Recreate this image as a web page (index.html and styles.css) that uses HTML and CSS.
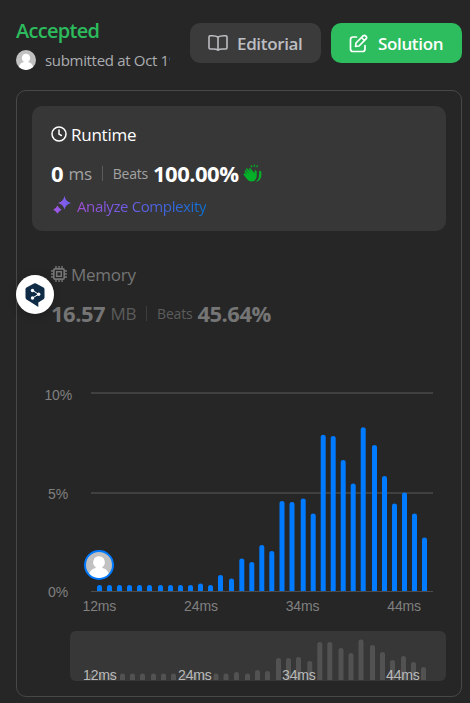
FILE: index.html
```html
<!DOCTYPE html>
<html lang="en">
<head>
<meta charset="utf-8">
<title>Submission result</title>
<link rel="stylesheet" href="styles.css">
</head>
<body>
<svg class="defs" width="0" height="0" aria-hidden="true">
  <defs>
    <linearGradient id="spark" x1="0" y1="0" x2="1" y2="0"><stop offset="0" stop-color="#a855e0"/><stop offset="1" stop-color="#6562f0"/></linearGradient>
    <clipPath id="round"><circle cx="10" cy="10" r="10"/></clipPath>
    <symbol id="avatar" viewBox="0 0 20 20"><g clip-path="url(#round)"><path d="M0 0h20v20H0z" fill="#c1c1c1"/><path d="M10 3.800A4.200 4.200 0 0 1 12.400 11.400V12.200C15.500 13 17 14.500 18 20H2C3 14.500 4.500 13 7.600 12.200V11.400A4.200 4.200 0 0 1 10 3.800Z" fill="#fff"/></g></symbol>
  </defs>
</svg>
<header class="top">
  <div class="status">
    <div class="accepted"><span>Accepted</span></div>
    <div class="by"><svg width="20" height="20"><use href="#avatar"/></svg><span class="submitted">submitted at Oct 19, 2024</span></div>
  </div>
  <div class="btn editorial">
    <svg width="20" height="18" viewBox="0 0 20 18" fill="none" stroke="currentColor" stroke-width="1.600" stroke-linejoin="round"><path d="M10 3.200C8.500 1.900 6.500 1.700 4 1.700H2.200Q1 1.700 1 2.900V13.800Q1 15 2.200 15H5C7.500 15 9 15.200 10 16.200C11 15.200 12.500 15 15 15H17.800Q19 15 19 13.800V2.900Q19 1.700 17.800 1.700H16C13.500 1.700 11.500 1.900 10 3.200V16"/></svg>
    <span>Editorial</span>
  </div>
  <div class="btn solution">
    <svg width="19" height="19" viewBox="0 0 19 19" fill="none" stroke="currentColor" stroke-width="1.700" stroke-linecap="round" stroke-linejoin="round"><path d="M7.500 3H4Q1.500 3 1.500 5.500V15Q1.500 17.500 4 17.500H13.500Q16 17.500 16 15V11.500"/><path d="M6.500 12.500L7 9L14.300 1.700Q15.600.8 16.900 2.100Q18.200 3.400 17.300 4.700L10 12ZM12.500 3.500L15.500 6.500"/></svg>
    <span>Solution</span>
  </div>
</header>
<main class="panel">
  <section class="card active">
    <div class="head"><svg width="16" height="16" viewBox="0 0 16 16" fill="none" stroke="currentColor" stroke-width="1.500" stroke-linecap="round" stroke-linejoin="round"><circle cx="8" cy="8" r="7"/><path d="M8 4v4.200l2.400 1.300"/></svg><span>Runtime</span></div>
    <div class="stats">
      <b class="zero">0</b><span class="unit">ms</span><i></i><span class="beats">Beats</span><b class="percent">100.00%</b>
      <svg class="clap" width="19" height="19" viewBox="0 0 19 19"><path d="M1 9.500Q1.700 8.500 2.600 9.400L4 10.800L1.500 7.200Q1.800 5.800 3 6.600L6.200 9.600L2.800 5Q3.500 3.400 4.900 4.900L8.400 8.600L5.900 4.700Q6.700 3.400 7.900 4.700L11.400 9.300L11.700 6.300Q13.500 5.800 13.700 7.700V12.500Q13 17.500 8.500 17.500Q5.500 17.500 3.500 14.500L.8 11Q.3 10 1 9.500Z" fill="#02b128"/><path d="M16.200 7Q18.500 5.900 18.300 8.500V12Q17.900 17 12.300 18Q15.800 15.500 16 12Z" fill="#02b128"/><path d="M8 1.200l.9 2M11.300 .6v2.400M14.500 1.200l-1 2" stroke="#02b128" stroke-width="1.200"/></svg>
    </div>
    <div class="analyze"><svg width="18" height="18" viewBox="0 0 18 18" fill="url(#spark)"><path d="M11.500 0Q12.600 5.500 18 7Q12.600 8.300 11.500 13.500Q10.300 8.300 5 7Q10.300 5.500 11.500 0ZM4.500 9.500Q5.600 12.200 8.700 13.700Q5.600 15.200 4.500 17.800Q3.300 15.200 .2 13.700Q3.300 12.200 4.500 9.500Z"/></svg><span>Analyze Complexity</span></div>
  </section>
  <section class="card memory">
    <div class="head"><svg width="16" height="16" viewBox="0 0 16 16" fill="none" stroke="currentColor"><rect x="2.800" y="2.800" width="10.400" height="10.400" rx="1.400" stroke-width="1.700"/><rect x="5.700" y="5.700" width="4.600" height="4.600" stroke-width="1.500"/><path d="M5 0v3M8 0v3M11 0v3M5 13v3M8 13v3M11 13v3M0 5h3M0 8h3M0 11h3M13 5h3M13 8h3M13 11h3" stroke-width="1.400"/></svg><span>Memory</span></div>
    <div class="stats"><b class="size">16.57</b><span class="unit mb">MB</span><i></i><span class="beats">Beats</span><b class="share">45.64%</b></div>
  </section>
  <svg class="chart" width="414" height="226" viewBox="32 380 414 226">
    <path class="grid" d="M91 393H433M91 493H433"/><path class="axis" d="M91 591.500H433"/>
    <g id="bars"></g>
    <circle cx="99" cy="565" r="14" fill="#c1c1c1"/>
    <svg x="85" y="551" width="28" height="28"><use href="#avatar"/></svg>
    <circle cx="99" cy="565" r="14" fill="none" stroke="#007aff" stroke-width="2"/>
    <g class="labels" text-anchor="end"><text x="72" y="400">10%</text><text x="68" y="499">5%</text><text x="68" y="597">0%</text></g>
  </svg>
  <div class="xlabels"><span>12ms</span><span>24ms</span><span>34ms</span><span>44ms</span></div>
  <svg class="mini" width="376" height="50" viewBox="70 631 376 50">
    <g id="minibars"></g>
    <g class="minilabels"><text x="83" y="680">12ms</text><text x="178" y="680">24ms</text><text x="282" y="680">34ms</text><text x="386" y="680">44ms</text></g>
  </svg>
</main>
<div class="translator"><svg width="20" height="24" viewBox="0 0 20 24"><path d="M9 .4Q10 0 11 .4L18.500 4.600Q19.500 5.200 19.500 6.300V14.600Q19.500 15.600 18.500 16.300L13.300 19.400V24L9.500 21.400L1.500 16.500Q.5 15.800.5 14.600V6.300Q.5 5.200 1.500 4.600Z" fill="#0f2b46"/><path d="M7.500 7.300L13.500 11.300L7.500 15" fill="none" stroke="#fff"/><g fill="#fff"><circle cx="7.500" cy="7.500" r="1.700"/><circle cx="13.700" cy="11.300" r="1.700"/><circle cx="7.500" cy="15" r="1.700"/></g></svg></div>
<script src="chart.js"></script>
</body>
</html>
```
FILE: styles.css
```css
* { box-sizing: border-box; }
body { margin: 0; width: 470px; height: 703px; padding: 16px 8px 0 16px; background: #262626; color: #fff; font-family: "Open Sans", "Noto Sans", sans-serif; overflow: hidden; position: relative; }
svg { flex: none; display: block; }
.defs { position: absolute; }
span, b { white-space: nowrap; }
.top { display: flex; height: 74px; padding-top: 7px; }
.status { width: 154px; margin-right: 20px; margin-top: -7px; }
.accepted { height: 30px; line-height: 30px; font-size: 20px; font-weight: 650; letter-spacing: -.7px; color: #2cbb5d; }
.by { display: flex; gap: 9px; height: 28px; align-items: center; color: #abadb0; font-size: 15px; }
.submitted { overflow: hidden; letter-spacing: -.32px; }
.btn { width: 131px; height: 40px; border-radius: 10px; display: flex; align-items: center; padding-left: 18px; gap: 9px; font-size: 17px; font-weight: 650; letter-spacing: -.35px; line-height: 40px; }
.btn span { position: relative; top: 1px; }
.editorial { background: #3b3b3b; color: #bdbec2; }
.solution { background: #2dbc5e; margin-left: 10px; gap: 10px; }
.panel { width: 446px; height: 607px; border: 1px solid #484848; border-radius: 10px; padding: 15px; }
.card { height: 125px; border-radius: 10px; padding: 16px 19px 0; }
.active { background: #373737; }
.memory { height: 149px; margin-top: 15px; color: #757575; }
.head { display: flex; align-items: center; gap: 4px; height: 25px; font-size: 17px; letter-spacing: -.25px; }
.head svg { margin-top: -2px; }
.stats { display: flex; align-items: center; margin-top: 10px; height: 32px; }
.stats b { font-size: 22px; font-weight: 700; letter-spacing: -.5px; }
.unit { font-size: 17px; letter-spacing: -.4px; color: #a3a3a3; margin-left: 5.5px; }
.stats i { width: 1px; height: 15px; background: #5b5b5b; margin: 0 10px; }
.beats { font-size: 14px; letter-spacing: -.2px; color: #a3a3a3; margin-right: 5px; }
.clap { margin-left: 4px; }
.memory .unit, .memory .beats { color: #5c5c5c; }
.memory i { background: #3e3e3e; }
.analyze { display: flex; align-items: center; gap: 6px; height: 33px; padding-left: 2px; font-size: 15px; letter-spacing: -.38px; }
.analyze span { background: linear-gradient(90deg, #a24fd5, #665fe8 45%, #0a70d2); background-clip: text; -webkit-background-clip: text; color: transparent; }
.analyze svg { margin-top: -1px; }
.chart { margin-top: -15px; }
.grid { stroke: #404040; stroke-width: 2; }
.axis { stroke: #4b4b4b; }
.chart text, .mini text, .xlabels { font-family: "Liberation Sans", Arial, sans-serif; font-size: 14px; letter-spacing: -.15px; }
.labels { fill: #808080; }
.xlabels { color: #808080; display: flex; justify-content: space-between; height: 32px; margin-top: -7px; padding: 0 25px 0 50.5px; line-height: 14px; }
.mini { margin-left: 38px; border-radius: 6px; background: #373737; }
.minilabels { fill: #bababa; }
.translator { position: absolute; left: 16px; top: 275px; width: 38px; height: 39px; border-radius: 50%; background: #fff; display: flex; align-items: center; justify-content: center; box-shadow: 0 2px 10px #0003; }
```
FILE: chart.js
```js
const main = [[97,585],[107,585],[117,585],[127,585],[137,585],[147,585],[158,585],[168,585],[178,585],[188,585],[198,583.5],[208,585],[218,575],[229,578.5],[239.3,558.5],[249.3,562],[259.3,545],[269.3,551],[279.5,501],[289.5,502],[300.7,498.5],[310.7,513.5],[320.7,434.7],[330.7,436],[340.7,460],[350.7,483.5],[360.7,427.3],[372,445],[382,476],[392,503.5],[402,492.5],[412,513.5],[422,537.5]];
const mini = [[89,673.5],[99,673.5],[109,673.5],[120,673.5],[130,673.5],[140,673.5],[151,673.5],[161,673.5],[171,673.5],[182,673.5],[192,673.5],[202,673.5],[213.5,673.5],[223.5,673.5],[234,672],[245,673.5],[255,670],[265,671],[276,658],[286,658],[296,657],[307.3,661],[317.3,642],[327.3,642],[338.5,648],[348.5,653],[358.5,639.5],[370,645],[380,652],[390,660],[401,656],[411,662],[421,667]];
const bars = (id, data, base, fill) => {
  document.getElementById(id).innerHTML = data.map(([x, y]) =>
    `<path fill="${fill}" d="M${x} ${base}V${y + 2}Q${x} ${y} ${x + 2.5} ${y}Q${x + 5} ${y} ${x + 5} ${y + 2}V${base}Z"/>`).join('');
};
bars('bars', main, 591, '#007aff');
bars('minibars', mini, 680, '#525252');
```
